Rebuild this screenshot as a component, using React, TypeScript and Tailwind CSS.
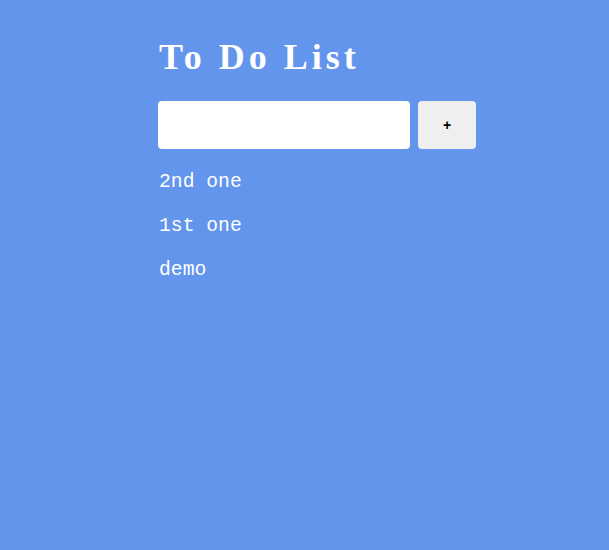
import React, { useState } from "react";

const App: React.FC = () => {
  const [items] = useState<string[]>(["2nd one", "1st one", "demo"]);

  return (
    <div className="min-h-[550px] w-full bg-[#6495ED] pl-[158px] pt-[35px]">
      {/* Title */}
      <h1 className="text-[36px] leading-[44px] font-bold tracking-[4px] text-white font-['Liberation_Serif',serif] pl-px">
        To Do List
      </h1>

      {/* Input row */}
      <div className="mt-[22px] flex gap-2">
        <input
          type="text"
          className="h-12 w-[252px] rounded bg-white outline-none px-2"
        />
        <button
          type="button"
          className="h-12 w-[58px] rounded bg-[#efefef] text-[14px] font-bold text-black font-['Liberation_Sans',sans-serif]"
        >
          +
        </button>
      </div>

      {/* Items */}
      <ul className="mt-[11px] font-['Liberation_Mono',monospace] text-[19.7px] text-white pl-px">
        {items.map((item) => (
          <li key={item} className="leading-[44px]">
            {item}
          </li>
        ))}
      </ul>
    </div>
  );
};

export default App;
